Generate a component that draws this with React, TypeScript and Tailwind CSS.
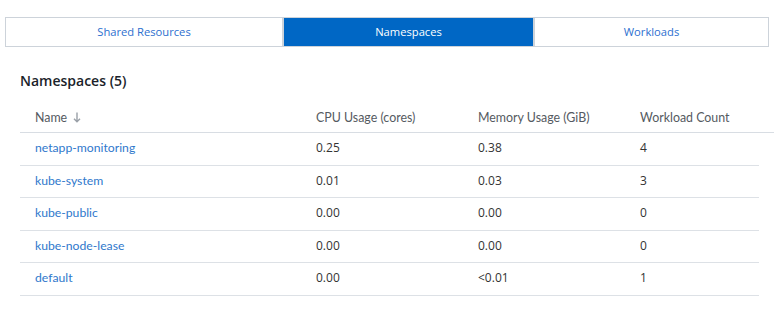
import React from 'react';

const tabs = ["Shared Resources", "Namespaces", "Workloads"];

const rows = [
  { name: "netapp-monitoring", cpu: "0.25", mem: "0.38", count: "4" },
  { name: "kube-system", cpu: "0.01", mem: "0.03", count: "3" },
  { name: "kube-public", cpu: "0.00", mem: "0.00", count: "0" },
  { name: "kube-node-lease", cpu: "0.00", mem: "0.00", count: "0" },
  { name: "default", cpu: "0.00", mem: "<0.01", count: "1" },
];

const App = () => {
  return (
    <div className="w-[783px] h-[322px] bg-white font-['Open_Sans',sans-serif] overflow-hidden">
      <div className="pt-[17px] px-[5px] w-[774px]">
        <div className="flex h-[30px]">
          {tabs.map((tab, i) => (
            <div
              key={i}
              className={
                i === 1
                  ? "w-[251px] flex items-center justify-center bg-[#0067c5] text-white text-[11.2px] border border-[#cdd3da]"
                  : i === 0
                  ? "w-[278px] flex items-center justify-center text-[#2c6fcf] text-[11.2px] border border-[#cdd3da]"
                  : "flex-1 flex items-center justify-center text-[#2c6fcf] text-[11.2px] border border-[#cdd3da]"
              }
            >
              {tab}
            </div>
          ))}
        </div>
      </div>

      <div className="pl-[20px] mt-[24px]">
        <h2 className="text-[14px] font-semibold text-[#1b1f2a] h-[20px] leading-[20px]">Namespaces (5)</h2>

        <div className="mt-[10px] w-[754px] h-[32px] pt-[3px] grid grid-cols-[281px_162px_162px_1fr] items-center border-b border-[#d8dde3] text-[#555a61] font-['Lato',sans-serif] text-[12.4px]">
          <div className="pl-[15px] flex items-center gap-[6px]">
            Name
            <svg width="8" height="11" viewBox="0 0 8 11" className="text-[#9aa0a8]">
              <path d="M4 0.5V9.5M1 6.8L4 9.8L7 6.8" fill="none" stroke="currentColor" strokeWidth="1.4" />
            </svg>
          </div>
          <div className="pl-[15px]">CPU Usage (cores)</div>
          <div className="pl-[15px]">Memory Usage (GiB)</div>
          <div className="pl-[15px]">Workload Count</div>
        </div>

        {rows.map((row, i) => (
          <div
            key={i}
            className="w-[739px] h-[32.5px] pb-[1px] grid grid-cols-[281px_162px_162px_1fr] items-center border-b border-[#dde1e6] text-[12px] text-[#333]"
          >
            <div className="pl-[15px] text-[#2f78cc] font-['Lato',sans-serif] text-[12.2px]">{row.name}</div>
            <div className="pl-[15px]">{row.cpu}</div>
            <div className="pl-[15px]">{row.mem}</div>
            <div className="pl-[15px]">{row.count}</div>
          </div>
        ))}
      </div>
    </div>
  );
};

export default App;
